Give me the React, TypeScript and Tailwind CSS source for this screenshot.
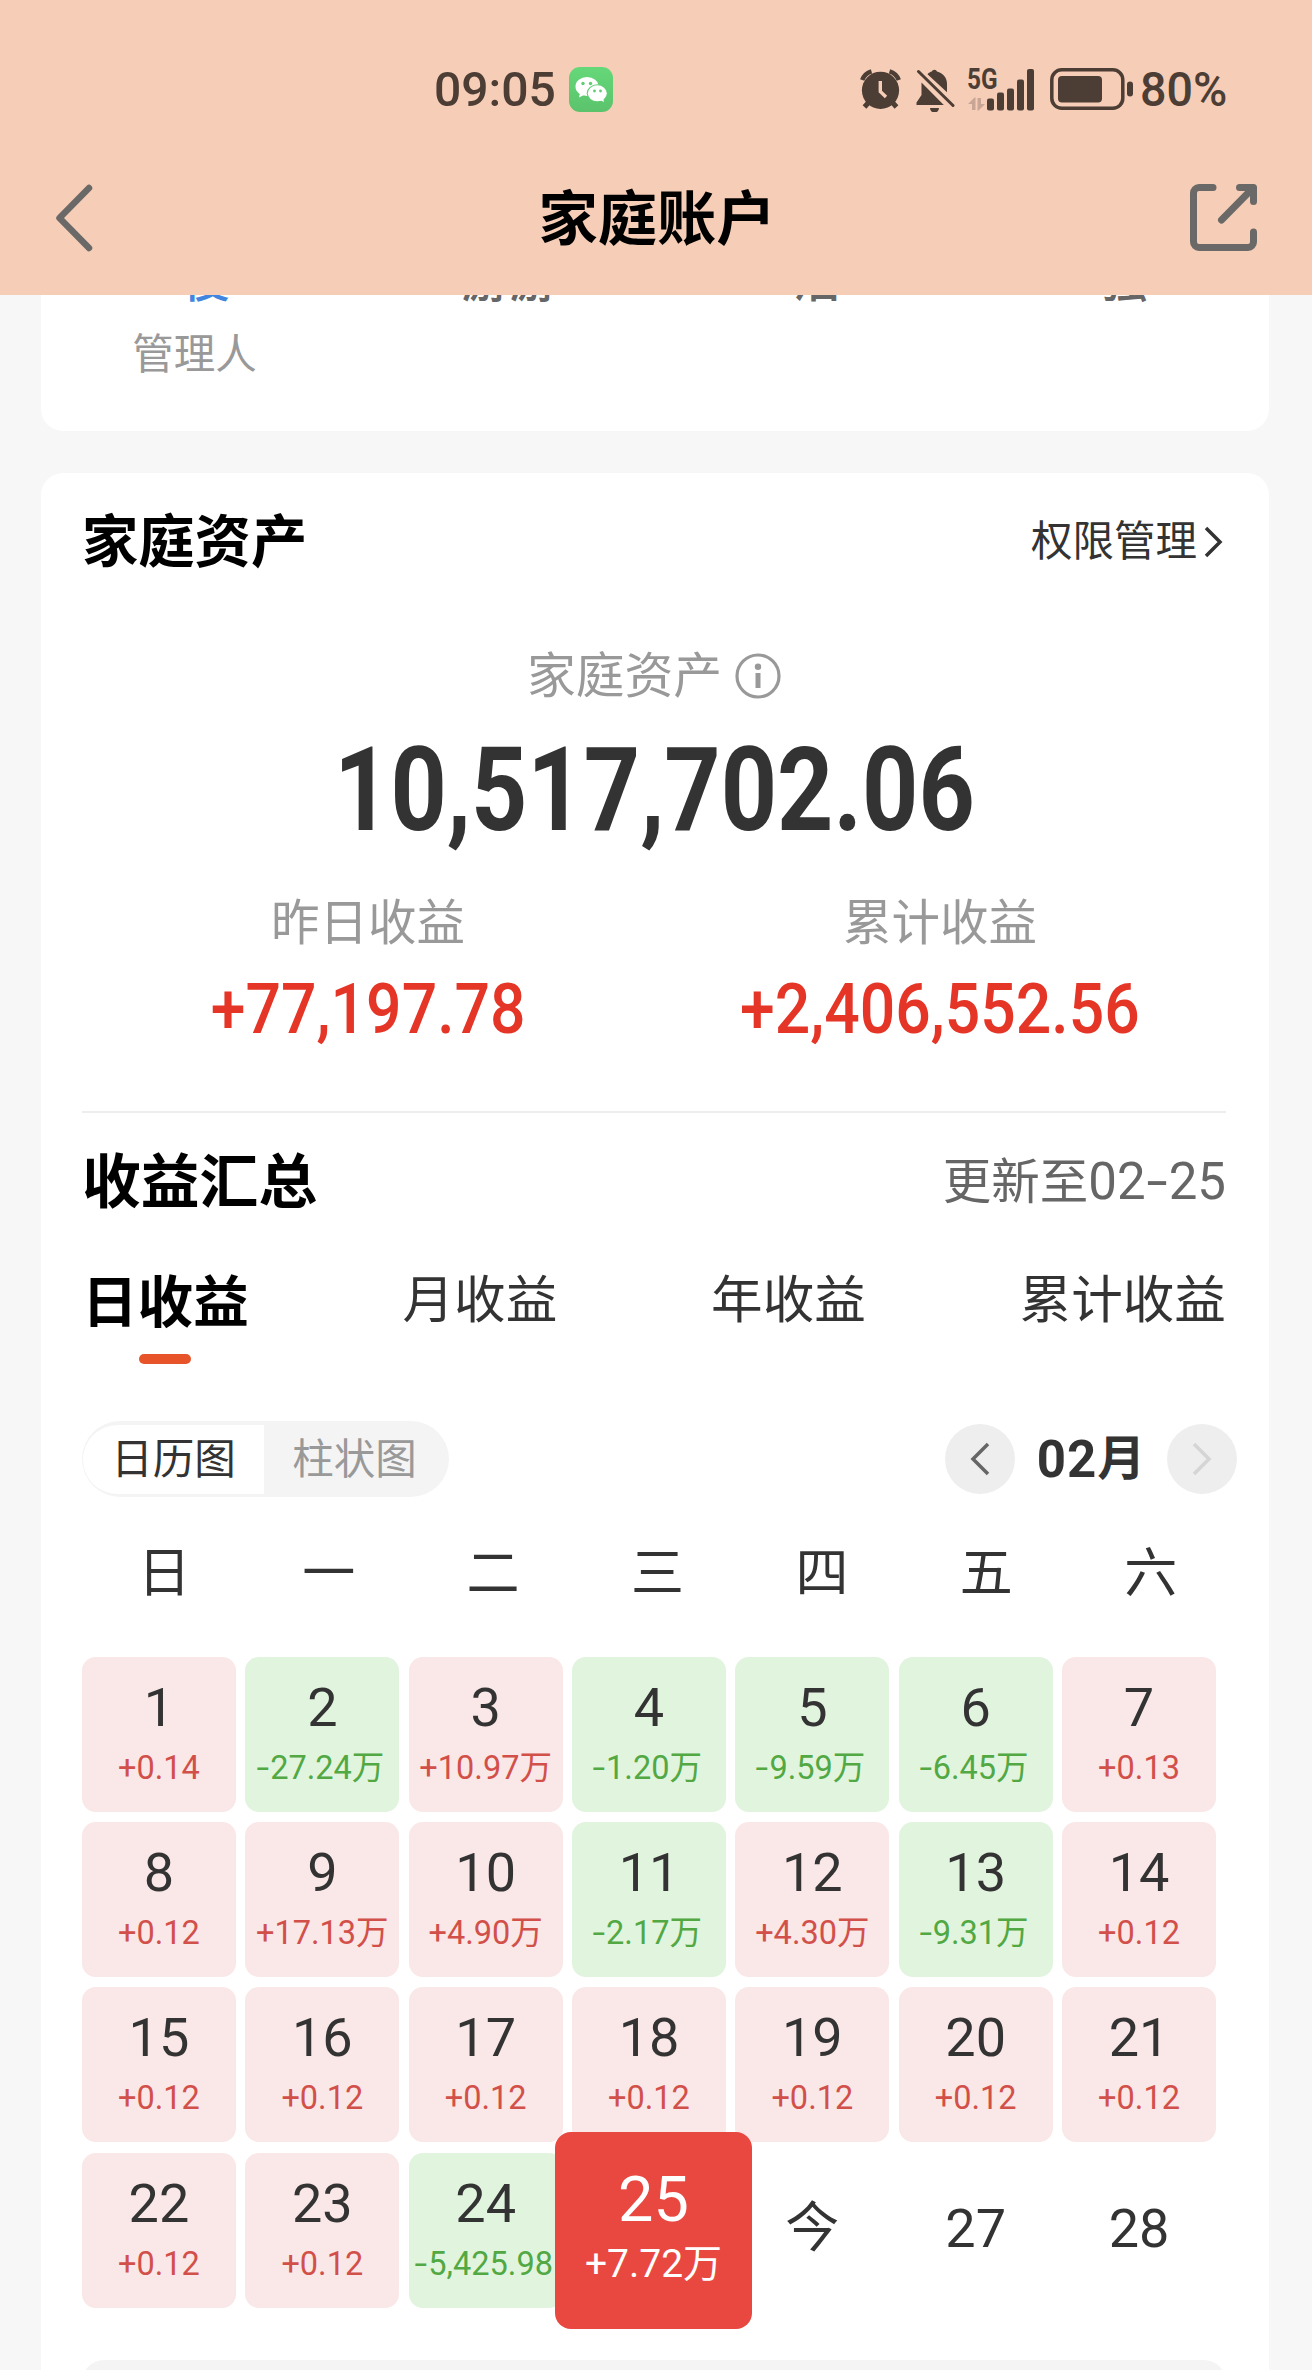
import React from "react";

type Day = { d: string; v?: string };

const WEEKDAYS = ["日", "一", "二", "三", "四", "五", "六"];

const DAYS: Day[] = [
  { d: "1", v: "+0.14" },
  { d: "2", v: "-27.24万" },
  { d: "3", v: "+10.97万" },
  { d: "4", v: "-1.20万" },
  { d: "5", v: "-9.59万" },
  { d: "6", v: "-6.45万" },
  { d: "7", v: "+0.13" },
  { d: "8", v: "+0.12" },
  { d: "9", v: "+17.13万" },
  { d: "10", v: "+4.90万" },
  { d: "11", v: "-2.17万" },
  { d: "12", v: "+4.30万" },
  { d: "13", v: "-9.31万" },
  { d: "14", v: "+0.12" },
  { d: "15", v: "+0.12" },
  { d: "16", v: "+0.12" },
  { d: "17", v: "+0.12" },
  { d: "18", v: "+0.12" },
  { d: "19", v: "+0.12" },
  { d: "20", v: "+0.12" },
  { d: "21", v: "+0.12" },
  { d: "22", v: "+0.12" },
  { d: "23", v: "+0.12" },
  { d: "24", v: "-5,425.98" },
  { d: "25", v: "+7.72万" },
  { d: "今" },
  { d: "27" },
  { d: "28" },
];

function WeChatIcon() {
  return (
    <svg width="44" height="45" viewBox="0 0 44 45" className="ml-[14px]">
      <defs>
        <linearGradient id="wx" x1="0" y1="0" x2="0" y2="1">
          <stop offset="0" stopColor="#65d879" />
          <stop offset="1" stopColor="#5bc36c" />
        </linearGradient>
      </defs>
      <rect width="44" height="45" rx="11" fill="url(#wx)" />
      <ellipse cx="18" cy="19.5" rx="11.5" ry="9.5" fill="#fff" />
      <path d="M11 26l-1 4.5 5-2.5z" fill="#fff" />
      <ellipse cx="28.3" cy="26.3" rx="10.6" ry="9" fill="#60cd72" />
      <ellipse cx="28.3" cy="26.3" rx="9.5" ry="8" fill="#fff" />
      <path d="M31 33l4 2-1-4.500z" fill="#fff" />
      <g fill="#60cd72">
        <circle cx="14" cy="16.500" r="1.700" />
        <circle cx="21.500" cy="16.500" r="1.700" />
        <circle cx="25.500" cy="24" r="1.400" />
        <circle cx="31.500" cy="24" r="1.400" />
      </g>
    </svg>
  );
}

function AlarmIcon() {
  return (
    <svg width="41" height="41" viewBox="0 0 41 41">
      <g fill="none" stroke="#4c3d35" strokeLinecap="butt">
        <path d="M2.200 11A14 14 0 0 1 11.500 2.300" strokeWidth="4.500" />
        <path d="M38.800 11A14 14 0 0 0 29.500 2.300" strokeWidth="4.500" />
        <path d="M9 33l-4.500 5M32 33l4.500 5" strokeWidth="5" />
      </g>
      <circle cx="20.500" cy="21.300" r="18.600" fill="#4c3d35" />
      <path d="M20.300 12v10.500l5.700 5.500" fill="none" stroke="#f6cdb7" strokeWidth="3.400" />
    </svg>
  );
}

function MutedBellIcon() {
  return (
    <svg width="39" height="44" viewBox="0 0 39 44" className="ml-[15px]">
      <g fill="#4c3d35">
        <path d="M11.500 6.200C13 4.700 14.300 4 15.800 3.600a2.700 2.700 0 0 1 5.200 0c6 1.400 10 6.200 10 12.200v8.500z" />
        <path d="M5.500 14.500L27.800 37H.5v-2.500l5-7.500z" />
        <path d="M14 40h9a4.500 4.500 0 0 1-9 0z" />
      </g>
      <path d="M2.500 3.500l34.500 34" stroke="#4c3d35" strokeWidth="3" strokeLinecap="round" />
    </svg>
  );
}

function Signal() {
  return (
    <div className="relative ml-[13px] h-[43px] w-[67px]">
      <span className="absolute -left-px top-0 origin-left scale-x-[.84] text-[29px] font-bold leading-[22px]">5G</span>
      <svg width="67" height="43" viewBox="0 0 67 43">
        <g fill="#4c3d35">
          <rect x="19" y="30.500" width="7" height="12" rx="2" />
          <rect x="29" y="24.500" width="7" height="18" rx="2" />
          <rect x="39" y="20.500" width="7" height="22" rx="2" />
          <rect x="49" y="11.500" width="7" height="31" rx="2" />
          <rect x="59" y="1" width="7" height="41.500" rx="2" />
        </g>
        <g fill="#c8a594">
          <path d="M0 36l6.500-6.500h1V42H4v-6z" />
          <path d="M17 36l-6.500 6.500h-1V30H13v6z" />
        </g>
      </svg>
    </div>
  );
}

function Battery() {
  return (
    <svg width="84" height="43" viewBox="0 0 84 43" className="ml-[15px]">
      <rect x="1.800" y="1.800" width="71" height="38.500" rx="10" fill="none" stroke="#4c3d35" strokeWidth="3.500" />
      <rect x="8" y="8" width="44" height="26.500" rx="4" fill="#4c3d35" />
      <rect x="77" y="13.500" width="6" height="15" rx="3" fill="#4c3d35" />
    </svg>
  );
}

function Header() {
  return (
    <header className="h-[295px] bg-[#f6cdb7]">
      <div className="flex h-[179px] items-center pl-[434px] pr-[85px] text-[49px] font-medium text-[#4c3d35]">
        <span className="w-[121px] origin-left scale-x-[.98] whitespace-nowrap leading-none">09:05</span>
        <WeChatIcon />
        <div className="ml-auto flex items-center">
          <AlarmIcon />
          <MutedBellIcon />
          <Signal />
          <Battery />
          <span className="ml-[6px] w-[87px] origin-left scale-x-[.95] whitespace-nowrap leading-none">80%</span>
        </div>
      </div>
      <div className="flex h-[77px] items-center justify-between pl-[54px] pr-[55px]">
        <svg width="40" height="70" viewBox="0 0 40 70" fill="none" stroke="#6a6967" strokeWidth="6.500" strokeLinecap="round" strokeLinejoin="round">
          <path d="M35 5L5.500 35 35 65" />
        </svg>
        <h1 className="ml-[30px] mt-[5px] text-[59.300px] font-bold leading-none text-black">家庭账户</h1>
        <svg width="67" height="67" viewBox="0 0 67 67" fill="none" stroke="#6a6967" strokeWidth="7" strokeLinecap="round" strokeLinejoin="round">
          <path d="M23 3.500H9A5.500 5.500 0 0 0 3.500 9v49A5.500 5.500 0 0 0 9 63.500h49a5.500 5.500 0 0 0 5.500-5.500V48" />
          <path d="M49.500 3.500h14v14M62 5L31.500 36" />
        </svg>
      </div>
    </header>
  );
}

function Members() {
  return (
    <section className="ml-[41px] mr-[43px] h-[136px] overflow-hidden rounded-b-[22px] bg-white">
      <div className="-mt-[40px] grid grid-cols-4 text-center text-[48px] font-medium leading-[52px] text-[#666]">
        <div className="pl-[24px] text-[#4285e0]">俊</div>
        <div className="pl-[15px]">游游</div>
        <div className="pl-[16px]">浩</div>
        <div className="pl-[16px]">强</div>
      </div>
      <div className="grid grid-cols-4 pt-[21px] text-center text-[41.500px] leading-[54px] text-[#999]">
        <div>管理人</div>
      </div>
    </section>
  );
}

function Assets() {
  return (
    <>
      <div className="flex h-[134px] items-center justify-between pt-[3px]">
        <h2 className="pt-[3px] text-[56.300px] font-bold leading-none text-black">家庭资产</h2>
        <div className="flex items-center text-[41.500px] leading-none text-[#333]">
          权限管理
          <svg width="20" height="32" viewBox="0 0 20 32" className="ml-[6px] mr-[3px]" fill="none" stroke="#333" strokeWidth="3.500">
            <path d="M3 2l14 14L3 30" />
          </svg>
        </div>
      </div>
      <div className="flex h-[132px] items-center justify-center pt-[5px] text-[48.800px] leading-none text-[#999]">
        <span className="pt-[3px]">家庭资产</span>
        <svg width="46" height="46" viewBox="0 0 46 46" className="ml-[13px]" fill="none" stroke="#999" strokeWidth="3.200">
          <circle cx="23" cy="23" r="21" />
          <circle cx="23" cy="13.800" r="3.200" fill="#999" stroke="none" />
          <path d="M23 20v15" strokeWidth="5" />
        </svg>
      </div>
      <div className="flex h-[98px] items-center justify-center pt-[5px]">
        <span className="origin-center scale-x-[.84] text-[117px] font-bold leading-none text-[#333]">10,517,702.06</span>
      </div>
      <div className="mt-[53px] grid h-[221px] grid-cols-2 text-center">
        {[
          ["昨日收益", "+77,197.78"],
          ["累计收益", "+2,406,552.56"],
        ].map(([label, value]) => (
          <div key={label}>
            <div className="text-[48.500px] leading-[68px] text-[#999]">{label}</div>
            <div className="mt-[14px] flex justify-center">
              <span className="scale-x-[.893] text-[70px] font-medium leading-[74px] text-[#e43527]">{value}</span>
            </div>
          </div>
        ))}
      </div>
      <div className="h-[2px] bg-[#eee]" />
    </>
  );
}

function Summary() {
  return (
    <>
      <div className="mt-[33px] flex h-[72px] items-center justify-between pt-[3px]">
        <h2 className="text-[58.800px] font-bold leading-none text-black">收益汇总</h2>
        <span className="pb-[4px] text-[48.500px] leading-none text-[#666]">
          更新至
          <span className="text-[51px]">
            02<span className="mx-[4.500px] inline-block scale-x-150">-</span>25
          </span>
        </span>
      </div>
      <div className="mt-[40px] flex justify-between text-[51.600px] leading-[82px] text-[#333]">
        <div className="flex flex-col items-center">
          <span className="mt-[4px] text-[55.600px] font-bold text-black">日收益</span>
          <span className="mt-[10px] h-[10px] w-[52px] rounded-full bg-[#e8542a]" />
        </div>
        <span className="mt-[2px]">月收益</span>
        <span className="mt-[2px]">年收益</span>
        <span className="mt-[2px]">累计收益</span>
      </div>
      <div className="-mr-[11px] mt-[57px] flex h-[76px] items-center justify-between">
        <div className="flex h-[76px] w-[367px] items-center rounded-full bg-[#f4f4f4] text-center text-[41.500px] leading-none">
          <div className="ml-px flex h-[69px] w-[181px] items-center justify-center rounded-l-full bg-white pt-[2px] text-[#333]">日历图</div>
          <div className="w-[181px] pt-[2px] text-[#999]">柱状图</div>
        </div>
        <div className="flex items-center">
          <div className="flex size-[70px] items-center justify-center rounded-full bg-[#eee]">
            <svg width="22" height="36" viewBox="0 0 22 36" fill="none" stroke="#666" strokeWidth="3.500">
              <path d="M19 3L4 18l15 15" />
            </svg>
          </div>
          <div className="flex w-[152px] items-center justify-center text-[48px] font-bold leading-none text-[#333]">
            <span className="text-[51px] tracking-[1px]">02</span>
            <span>月</span>
          </div>
          <div className="flex size-[70px] items-center justify-center rounded-full bg-[#eee]">
            <svg width="22" height="36" viewBox="0 0 22 36" fill="none" stroke="#d5d5d5" strokeWidth="3.500">
              <path d="M3 3l15 15L3 33" />
            </svg>
          </div>
        </div>
      </div>
    </>
  );
}

function Amount({ value }: { value: string }) {
  if (!value.startsWith("-")) return <>{value}</>;
  return (
    <>
      <span className="mr-[1px] inline-block origin-right scale-x-[1.4]">-</span>
      {value.slice(1)}
    </>
  );
}

function DayCell({ day }: { day: Day }) {
  if (!day.v) {
    return (
      <div className="flex h-[155px] items-center justify-center pb-[2px] text-[54px] leading-none text-[#333]">{day.d}</div>
    );
  }
  if (day.d === "25") {
    return (
      <div className="relative h-[155px]">
        <div className="absolute -left-[17px] -top-[21px] z-10 flex h-[197px] w-[197px] flex-col items-center rounded-[16px] bg-[#e94840] pt-[37px] text-white">
          <span className="text-[63px] leading-[62px]">{day.d}</span>
          <span className="mt-[7px] whitespace-nowrap text-[39px] leading-[52px]">{day.v}</span>
        </div>
      </div>
    );
  }
  const up = day.v.startsWith("+");
  return (
    <div className={`flex h-[155px] flex-col items-center rounded-[14px] pt-[23px] ${up ? "bg-[#fae7e7]" : "bg-[#e1f4de]"}`}>
      <span className="text-[54px] leading-[56px] text-[#333]">{day.d}</span>
      <span className={`mt-[12px] whitespace-nowrap text-[32.500px] leading-[40px] ${up ? "text-[#d2504a]" : "text-[#52a843]"}`}>
        <Amount value={day.v} />
      </span>
    </div>
  );
}

function Calendar() {
  return (
    <>
      <div className="-mr-[7px] mt-[37px] grid grid-cols-7 text-center text-[53px] leading-[80px] text-[#333]">
        {WEEKDAYS.map((w) => (
          <span key={w}>{w}</span>
        ))}
      </div>
      <div className="mr-[10px] mt-[43px] grid grid-cols-7 gap-x-[9.400px] gap-y-[10.200px]">
        {DAYS.map((day) => (
          <DayCell key={day.d} day={day} />
        ))}
      </div>
      <div className="mt-[52px] h-[60px] rounded-[22px] bg-[#f4f4f4]" />
    </>
  );
}

export default function App() {
  return (
    <div className="h-[2370px] w-[1312px] overflow-hidden bg-[#f7f7f7] font-[Roboto,'Noto_Sans_CJK_SC',sans-serif]">
      <Header />
      <Members />
      <section className="ml-[41px] mr-[43px] mt-[42px] rounded-t-[22px] bg-white pl-[41px] pr-[43px]">
        <Assets />
        <Summary />
        <Calendar />
      </section>
    </div>
  );
}
